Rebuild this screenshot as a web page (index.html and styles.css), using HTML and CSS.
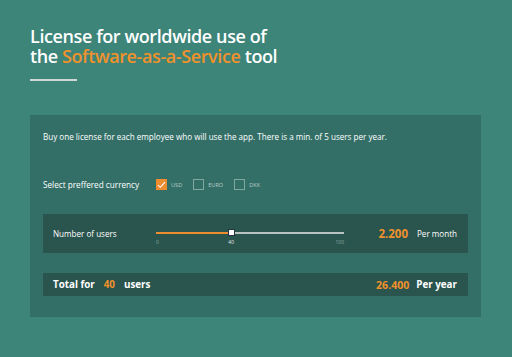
FILE: index.html
```html
<!DOCTYPE html>
<html lang="en">
<head>
  <meta charset="UTF-8">
  <title>License</title>
  <link rel="stylesheet" href="styles.css">
</head>
<body>
  <div class="page">
    <!-- Heading -->
    <h1 class="title">License for worldwide use of<br>the <span class="accent">Software-as-a-Service</span> tool</h1>
    <div class="rule"></div>

    <!-- Calculator panel -->
    <div class="panel">
      <p class="intro">Buy one license for each employee who will use the app. There is a min. of 5 users per year.</p>

      <div class="currency">
        <span class="currency-label">Select preffered currency</span>
        <label class="check checked">
          <span class="box">
            <svg width="9" height="8" viewBox="0 0 9 8"><path d="M1 4.2 L3.3 6.3 L8 1.2" fill="none" stroke="#fff" stroke-width="1.1"/></svg>
          </span>USD
        </label>
        <label class="check"><span class="box"></span>EURO</label>
        <label class="check"><span class="box"></span>DKK</label>
      </div>

      <div class="bar users">
        <span class="bar-label">Number of users</span>
        <div class="slider">
          <div class="track">
            <div class="fill" style="width: 40%"></div>
            <div class="thumb" style="left: 40%"></div>
          </div>
          <div class="ticks">
            <span>0</span>
            <span class="tick-mid" style="left: 40%">40</span>
            <span>100</span>
          </div>
        </div>
        <span class="amount">2.200</span>
        <span class="period">Per month</span>
      </div>

      <div class="bar total">
        <span>Total for</span>
        <span class="accent count">40</span>
        <span>users</span>
        <span class="accent total-amount">26.400</span>
        <span class="period">Per year</span>
      </div>
    </div>
  </div>
</body>
</html>
```

FILE: styles.css
```css
body {
  margin: 0;
  background: #3d8479;
  font-family: "Open Sans", "Noto Sans", sans-serif;
  color: #fff;
}

.page {
  padding: 26px 30px 0;
}

.title {
  margin: 0;
  font-size: 18px;
  font-weight: 600;
  line-height: 20px;
  letter-spacing: -0.4px;
}

.accent {
  color: #f0922b;
}

.rule {
  width: 47px;
  height: 2px;
  margin-top: 13px;
  background: #cfd8d4;
}

/* Panel */
.panel {
  width: 425px;
  height: 176px;
  margin-top: 34px;
  padding: 13px;
  background: #336f67;
}

.intro {
  margin: 3px 0 0;
  font-size: 8.1px;
  line-height: 12px;
}

.currency {
  display: flex;
  align-items: center;
  margin-top: 36px;
  font-size: 8.2px;
}

.currency-label {
  width: 113px;
}

.check {
  display: flex;
  align-items: center;
  margin-right: 11px;
  font-size: 5.6px;
  color: #b9cdc8;
}

.box {
  display: flex;
  align-items: center;
  justify-content: center;
  width: 9px;
  height: 9px;
  margin-right: 4px;
  border: 1px solid #7fa8a0;
}

.checked .box {
  background: #ee8c30;
  border-color: #ee8c30;
}

/* Bars */
.bar {
  display: flex;
  align-items: center;
  padding: 0 11px 0 10px;
  background: #2a544e;
}

.users {
  height: 39px;
  margin-top: 24px;
  font-size: 8.1px;
}

.bar-label {
  width: 103px;
}

.slider {
  position: relative;
  width: 188px;
  margin-top: 10px;
}

.track {
  position: relative;
  height: 2px;
  background: #b7c4c1;
}

.fill {
  height: 100%;
  background: #ee8c30;
}

.thumb {
  position: absolute;
  top: -3px;
  width: 7px;
  height: 7px;
  margin-left: -3px;
  background: #fff;
  border: 0.5px solid #234;
  box-sizing: border-box;
}

.ticks {
  position: relative;
  display: flex;
  justify-content: space-between;
  margin-top: 5px;
  font-size: 5px;
  color: #8ea9a4;
}

.tick-mid {
  position: absolute;
  transform: translateX(-50%);
  color: #e6ecea;
}

.amount {
  margin-left: auto;
  font-size: 11.5px;
  font-weight: 700;
  color: #f0922b;
}

.period {
  margin-left: 9px;
}

.total {
  height: 23px;
  margin-top: 20px;
  font-size: 9.8px;
  font-weight: 700;
}

.count {
  margin: 0 9px 0 9px;
}

.total-amount {
  margin-left: auto;
  font-size: 10.6px;
}

.total .period {
  margin-left: 7px;
}
```
